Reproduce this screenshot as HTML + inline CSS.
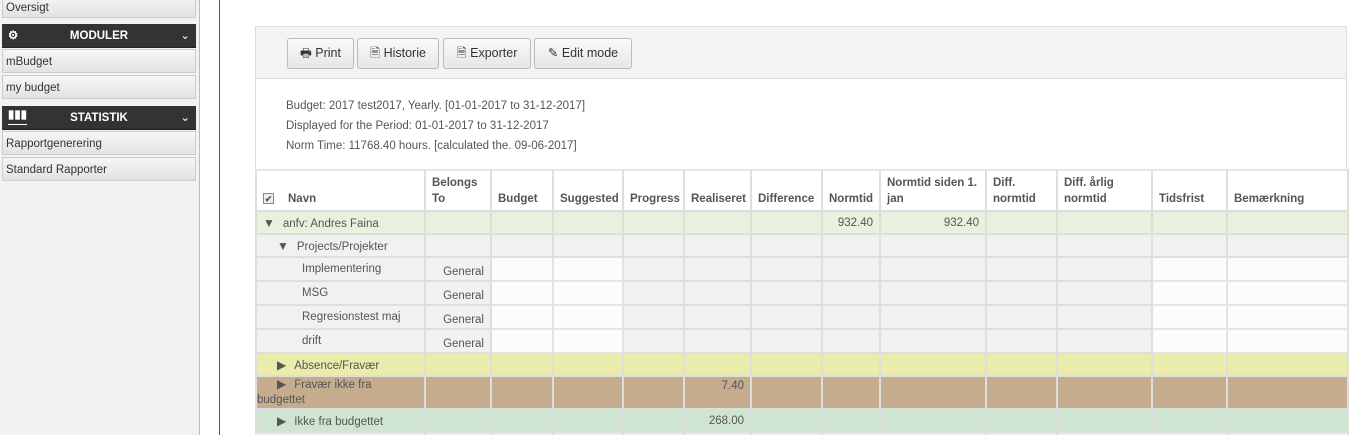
<!DOCTYPE html>
<html style="overflow:hidden;height:435px"><head><meta charset="utf-8"><style>
*{box-sizing:border-box}
body{margin:0;width:1358px;height:435px;overflow:hidden;background:#fff;font-family:"Liberation Sans",sans-serif;font-size:11.5px;color:#555;position:relative}
#side{position:absolute;left:0;top:0;width:200px;height:435px;background:#f2f2f2;border-right:1px solid #bbb}
#line2{position:absolute;left:219px;top:0;width:1px;height:435px;background:#555}
.it{position:absolute;left:2px;width:194px;height:24px;background:linear-gradient(#f6f6f6,#e2e2e2);border:1px solid #ccc;color:#333;font-size:11.5px;padding:5px 3px;line-height:14px}
.hd{position:absolute;left:2px;width:194px;height:24px;background:#333;color:#fff;font-weight:bold;font-size:11.5px;text-align:center;line-height:24px;border-bottom:1px solid #222}
.hd .ch{position:absolute;right:6px;top:0;font-weight:normal}
.hd .ic{position:absolute;left:6px;top:0}
#panel{position:absolute;left:255px;top:26px;width:1092px;height:420px;border:1px solid #ddd}
#tb{height:52px;background:#f3f3f3;border-bottom:1px solid #ddd;position:relative}
.btn{position:absolute;top:11px;height:31px;border:1px solid #bbb;border-radius:3px;background:linear-gradient(#fafafa,#e6e6e6);color:#333;font-size:12.5px;line-height:29px;text-align:center}
#info{padding:17px 0 0 30px;line-height:20px;font-size:11.5px;color:#555}
table{position:absolute;left:255px;top:169px;border-collapse:collapse;table-layout:fixed;width:1092px}
td,th{border:2px solid #dedede;padding:0 6px;height:23px;vertical-align:middle;overflow:hidden;white-space:nowrap}
tr.q td{height:24px}
th{background:#fff;color:#555;font-weight:bold;text-align:left;vertical-align:bottom;padding-bottom:3px;height:41px;white-space:normal;line-height:16px;border-top-color:#e6e6e6}
.g td{background:#e8f1dd}.p td{background:#f1f1f1}.y td{background:#e9ecaa}.b td{background:#c4ac8c}.m td{background:#cfe5d2}
.r{text-align:right}
td.in{background:#fcfcfc!important;border-color:#e4e4e4}
.tri{display:inline-block;font-size:12px;color:#555;margin-right:8px}
</style></head><body>
<div id="side">
<div class="it" style="top:-6px;height:24px;padding-top:6px">Oversigt</div>
<div class="hd" style="top:24px"><span class="ic">⚙</span>MODULER<span class="ch">⌄</span></div>
<div class="it" style="top:49px">mBudget</div>
<div class="it" style="top:75px">my budget</div>
<div class="hd" style="top:106px"><span class="ic" style="border-bottom:1px solid #fff;line-height:18px">▮▮▮</span>STATISTIK<span class="ch">⌄</span></div>
<div class="it" style="top:131px">Rapportgenerering</div>
<div class="it" style="top:157px">Standard Rapporter</div>
</div>
<div id="line2"></div>
<div id="panel">
<div id="tb">
<div class="btn" style="left:31px;width:67px">🖶 Print</div>
<div class="btn" style="left:101px;width:82px">🗎 Historie</div>
<div class="btn" style="left:187px;width:88px">🗎 Exporter</div>
<div class="btn" style="left:278px;width:98px">✎ Edit mode</div>
</div>
<div id="info">Budget: 2017 test2017, Yearly. [01-01-2017 to 31-12-2017]<br>Displayed for the Period: 01-01-2017 to 31-12-2017<br>Norm Time: 11768.40 hours. [calculated the. 09-06-2017]</div>
</div>
<table>
<colgroup><col style="width:169px"><col style="width:66px"><col style="width:62px"><col style="width:70px"><col style="width:61px"><col style="width:67px"><col style="width:71px"><col style="width:58px"><col style="width:106px"><col style="width:71px"><col style="width:95px"><col style="width:75px"><col style="width:121px"></colgroup>
<tr><th><span style="display:inline-block;width:11px;height:11px;border:1px solid #888;background:#eee;font-size:9px;line-height:10px;text-align:center;margin:0 14px 0 0">✔</span>Navn</th><th>Belongs To</th><th>Budget</th><th>Suggested</th><th>Progress</th><th>Realiseret</th><th>Difference</th><th>Normtid</th><th>Normtid siden 1. jan</th><th>Diff. normtid</th><th>Diff. årlig normtid</th><th>Tidsfrist</th><th>Bemærkning</th></tr>
<tr class="g"><td><span class="tri">▼</span>anfv: Andres Faina</td><td></td><td></td><td></td><td></td><td></td><td></td><td class="r">932.40</td><td class="r">932.40</td><td></td><td></td><td></td><td></td></tr>
<tr class="p"><td style="padding-left:20px"><span class="tri">▼</span>Projects/Projekter</td><td></td><td></td><td></td><td></td><td></td><td></td><td></td><td></td><td></td><td></td><td></td><td></td></tr>
<tr class="p q"><td style="padding-left:45px">Implementering</td><td class="r" style="padding-top:6px">General</td><td class="in"></td><td class="in"></td><td></td><td></td><td></td><td></td><td></td><td></td><td></td><td class="in"></td><td class="in"></td></tr>
<tr class="p q"><td style="padding-left:45px">MSG</td><td class="r" style="padding-top:6px">General</td><td class="in"></td><td class="in"></td><td></td><td></td><td></td><td></td><td></td><td></td><td></td><td class="in"></td><td class="in"></td></tr>
<tr class="p q"><td style="padding-left:45px">Regresionstest maj</td><td class="r" style="padding-top:6px">General</td><td class="in"></td><td class="in"></td><td></td><td></td><td></td><td></td><td></td><td></td><td></td><td class="in"></td><td class="in"></td></tr>
<tr class="p q"><td style="padding-left:45px">drift</td><td class="r" style="padding-top:6px">General</td><td class="in"></td><td class="in"></td><td></td><td></td><td></td><td></td><td></td><td></td><td></td><td class="in"></td><td class="in"></td></tr>
<tr class="y"><td style="padding-left:20px"><span class="tri">▶</span>Absence/Fravær</td><td></td><td></td><td></td><td></td><td></td><td></td><td></td><td></td><td></td><td></td><td></td><td></td></tr>
<tr class="b"><td style="padding:0;height:33px;white-space:normal;line-height:15px"><span style="padding-left:20px"><span class="tri">▶</span>Fravær ikke fra</span><br>budgettet</td><td></td><td></td><td></td><td></td><td class="r" style="vertical-align:top;padding-top:3px">7.40</td><td></td><td></td><td></td><td></td><td></td><td></td><td></td></tr>
<tr class="m"><td style="padding-left:20px"><span class="tri">▶</span>Ikke fra budgettet</td><td></td><td></td><td></td><td></td><td class="r">268.00</td><td></td><td></td><td></td><td></td><td></td><td></td><td></td></tr>
<tr class="g"><td></td><td></td><td></td><td></td><td></td><td></td><td></td><td></td><td></td><td></td><td></td><td></td><td></td></tr>
</table>
</body></html>
